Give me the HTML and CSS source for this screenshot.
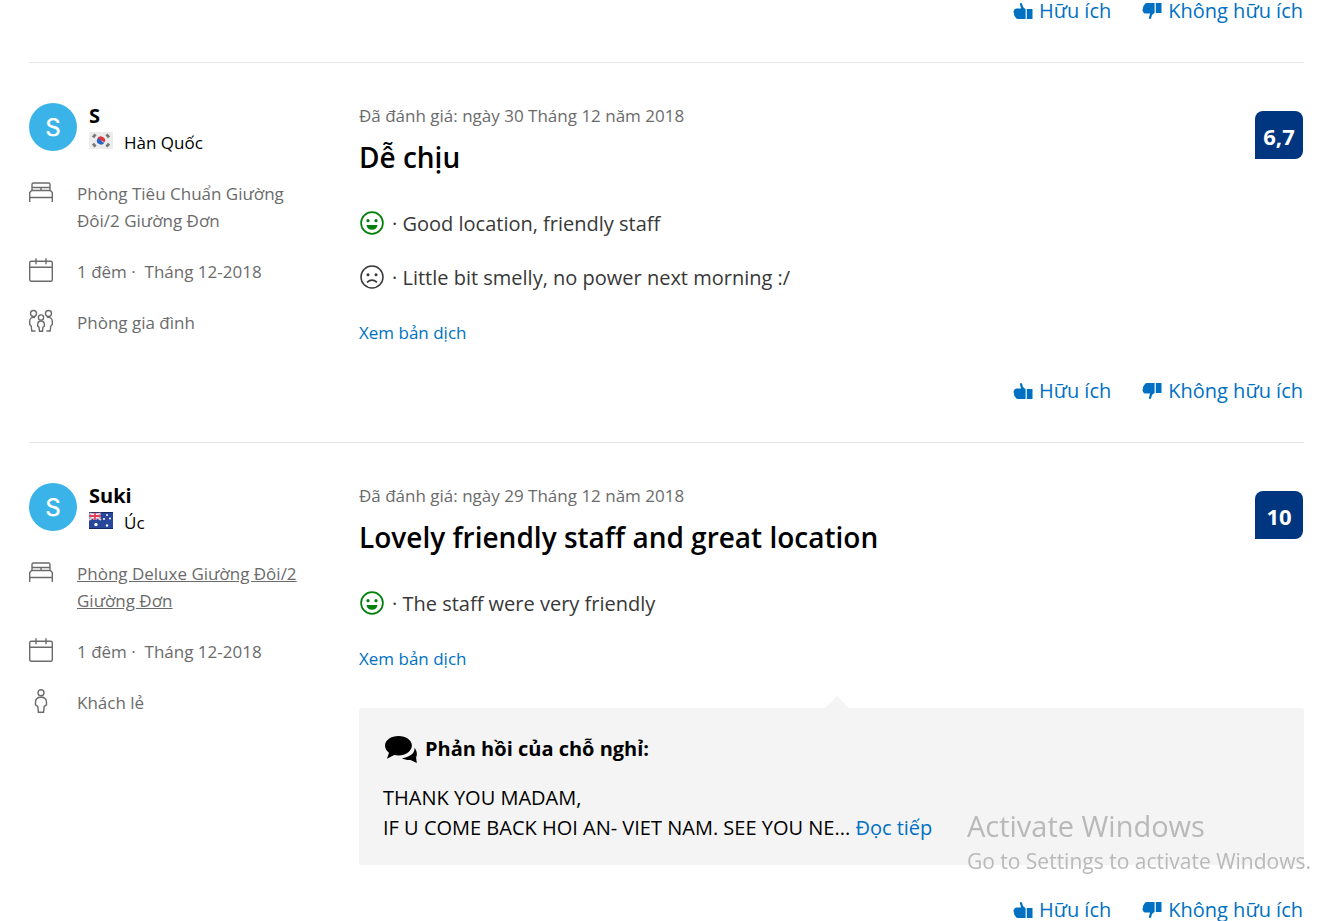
FILE: index.html
```
<!DOCTYPE html>
<html lang="vi">
<head>
<meta charset="utf-8">
<meta name="viewport" content="width=device-width, initial-scale=1">
<title>Đánh giá của khách</title>
<link rel="stylesheet" href="styles.css">
</head>
<body>
<svg class="sprite" aria-hidden="true">
  <symbol id="bed" viewBox="0 0 24 24"><path d="M3 10.500V4.500Q3 3 4.500 3h15Q21 3 21 4.500v6M3.500 7.500h17M12 7.500v3M.7 22v-9.500l2-2h18.600l2 2V22M.7 17.500h22.600"/></symbol>
  <symbol id="calendar" viewBox="0 0 24 24"><rect x=".7" y="3.200" width="22.600" height="20" rx="1.500"/><path d="M.7 9.200h22.600M7 .3v6M17 .3v6"/></symbol>
  <symbol id="family" viewBox="0 0 24 24"><circle cx="4.500" cy="4.500" r="3"/><circle cx="19.500" cy="4.500" r="3"/><circle cx="12" cy="8.500" r="2.600"/><path d="M6 8.500Q1 7.800.7 12v3.500l1.500 1.500.6 5H6.500M18 8.500q5-.7 5.300 3.500v3.500l-1.500 1.500-.6 5h-3.700M12 12q-3.300 0-3.300 3.200v2l1.300 1 .5 4h3l.5-4 1.300-1v-2Q15.300 12 12 12z"/></symbol>
  <symbol id="person" viewBox="0 0 24 24"><circle cx="12" cy="3.700" r="3"/><path d="M12 8.300q-5.500 0-5.500 5v2.500l2.300 1.700.6 5.800h5.200l.6-5.800 2.300-1.700v-2.500q0-5-5.500-5z"/></symbol>
  <symbol id="smile" viewBox="0 0 24 24"><circle cx="12" cy="12" r="10.900" fill="none" stroke="currentColor" stroke-width="1.700"/><circle cx="8" cy="9.700" r="1.600"/><circle cx="16" cy="9.700" r="1.600"/><path d="M6.500 14h11q-.6 4.700-5.500 4.700T6.500 14z"/></symbol>
  <symbol id="frown" viewBox="0 0 24 24"><circle cx="12" cy="12" r="11" fill="none" stroke="currentColor" stroke-width="1.500"/><circle cx="8" cy="9.700" r="1.500"/><circle cx="16" cy="9.700" r="1.500"/><path d="M7 17.300q5-4.500 10 0" fill="none" stroke="currentColor" stroke-width="1.600"/></symbol>
  <symbol id="thumb" viewBox="0 0 20 20"><path d="M6.800 2.800Q7.800 1.500 9 2.600L10 6l2.600 2.300V18H5q-2.200 0-2.700-2l-1.100-1.500-.2-1.800-.6-2 .8-1.800Q1.600 7.400 3.500 7.400h4.600zM13.800 8H19.500v10h-5.700z"/></symbol>
  <symbol id="chat" viewBox="0 0 34 30"><path d="M15.500 2C8 2 2 6.200 2 11.600c0 2.900 1.500 5.300 4 7.200L4 24.700l7.200-3.600q2 .4 4.300.4c7.500 0 13.400-4.400 13.400-9.900S23 2 15.500 2z"/><path d="M31.500 13.500c.8 6-5 9.800-12.500 10.700 2.500 1.500 6 2 8.500 1.700l6.300 3-.7-5.500c1.500-3 .7-6.500-1.600-9.900z"/></symbol>
</svg>

<main class="reviews">
  <article class="review review--partial">
    <div class="actions">
      <button class="vote" type="button"><svg class="vote__icon"><use href="#thumb"/></svg>Hữu ích</button>
      <button class="vote" type="button"><svg class="vote__icon vote__icon--down"><use href="#thumb"/></svg>Không hữu ích</button>
    </div>
  </article>

  <article class="review">
    <div class="review__grid">
      <aside class="guest">
        <header class="guest__head">
          <span class="avatar">S</span>
          <div>
            <div class="guest__name">S</div>
            <div class="guest__country">
              <svg class="flag" viewBox="0 0 24 17"><rect width="24" height="17" fill="#ececec"/><path d="M8.400 6.700a4 4 0 0 1 7.200 3.600z" fill="#e0343f"/><path d="M8.400 6.700a4 4 0 0 0 7.200 3.600q-1.500.8-3.600-1.800T8.400 6.700z" fill="#2961c4"/><path d="M4 5.300l2.500-3M17.500 2.300l2.500 3M4 11.700l2.500 3M17.500 14.700l2.500-3" stroke="#777" stroke-width="2.800"/></svg>
              Hàn Quốc
            </div>
          </div>
        </header>
        <ul class="stay">
          <li class="stay__item"><svg class="stay__icon"><use href="#bed"/></svg><span>Phòng Tiêu Chuẩn Giường Đôi/2 Giường Đơn</span></li>
          <li class="stay__item"><svg class="stay__icon"><use href="#calendar"/></svg><span>1 đêm ·&nbsp; Tháng 12-2018</span></li>
          <li class="stay__item"><svg class="stay__icon"><use href="#family"/></svg><span>Phòng gia đình</span></li>
        </ul>
      </aside>
      <section class="content">
        <div class="content__head">
          <div>
            <p class="date">Đã đánh giá: ngày 30 Tháng 12 năm 2018</p>
            <h3 class="title">Dễ chịu</h3>
          </div>
          <div class="score">6,7</div>
        </div>
        <div class="comments">
          <p class="comment"><svg class="face face--good"><use href="#smile"/></svg>· Good location, friendly staff</p>
          <p class="comment"><svg class="face"><use href="#frown"/></svg>· Little bit smelly, no power next morning :/</p>
        </div>
        <a class="translate" href="#">Xem bản dịch</a>
      </section>
    </div>
    <div class="actions">
      <button class="vote" type="button"><svg class="vote__icon"><use href="#thumb"/></svg>Hữu ích</button>
      <button class="vote" type="button"><svg class="vote__icon vote__icon--down"><use href="#thumb"/></svg>Không hữu ích</button>
    </div>
  </article>

  <article class="review">
    <div class="review__grid">
      <aside class="guest">
        <header class="guest__head">
          <span class="avatar">S</span>
          <div>
            <div class="guest__name">Suki</div>
            <div class="guest__country">
              <svg class="flag" viewBox="0 0 24 17"><rect width="24" height="17" fill="#28469a"/><path d="M0 0l12 8M12 0L0 8" stroke="#f3c6cf" stroke-width="2"/><path d="M6 0v8M0 4h12" stroke="#fff" stroke-width="3"/><path d="M6 0v8M0 4h12" stroke="#e0405a" stroke-width="1.800"/><g fill="#fff"><circle cx="7" cy="12.500" r="1.700"/><circle cx="18" cy="3" r="1"/><circle cx="15" cy="7" r="1"/><circle cx="21" cy="6.500" r="1"/><circle cx="18" cy="13.500" r="1.200"/></g><path d="M0 .5h24M0 16.500h24" stroke="#101c50" opacity=".7"/></svg>
              Úc
            </div>
          </div>
        </header>
        <ul class="stay">
          <li class="stay__item"><svg class="stay__icon"><use href="#bed"/></svg><a class="stay__link" href="#">Phòng Deluxe Giường Đôi/2 Giường Đơn</a></li>
          <li class="stay__item"><svg class="stay__icon"><use href="#calendar"/></svg><span>1 đêm ·&nbsp; Tháng 12-2018</span></li>
          <li class="stay__item"><svg class="stay__icon"><use href="#person"/></svg><span>Khách lẻ</span></li>
        </ul>
      </aside>
      <section class="content">
        <div class="content__head">
          <div>
            <p class="date">Đã đánh giá: ngày 29 Tháng 12 năm 2018</p>
            <h3 class="title">Lovely friendly staff and great location</h3>
          </div>
          <div class="score">10</div>
        </div>
        <div class="comments">
          <p class="comment"><svg class="face face--good"><use href="#smile"/></svg>· The staff were very friendly</p>
        </div>
        <a class="translate" href="#">Xem bản dịch</a>
        <div class="reply">
          <h4 class="reply__title"><svg class="reply__icon"><use href="#chat"/></svg>Phản hồi của chỗ nghỉ:</h4>
          <p class="reply__text">THANK YOU MADAM,<br>IF U COME BACK HOI AN- VIET NAM. SEE YOU NE... <a class="reply__more" href="#">Đọc tiếp</a></p>
        </div>
      </section>
    </div>
    <div class="actions">
      <button class="vote" type="button"><svg class="vote__icon"><use href="#thumb"/></svg>Hữu ích</button>
      <button class="vote" type="button"><svg class="vote__icon vote__icon--down"><use href="#thumb"/></svg>Không hữu ích</button>
    </div>
  </article>
</main>

<div class="watermark">
  <div class="watermark__title">Activate Windows</div>
  <div class="watermark__text">Go to Settings to activate Windows.</div>
</div>
</body>
</html>
```
FILE: styles.css
```
* {
  box-sizing: border-box;
}

html {
  scrollbar-width: none;
}

body,
p,
h3,
h4,
ul {
  margin: 0;
  padding: 0;
}

body {
  background: #fff;
  color: #000;
  font-family: "Segoe UI", "Open Sans", "Noto Sans", sans-serif;
  font-size: 17px;
  line-height: 27px;
}

.sprite {
  position: absolute;
  width: 0;
  height: 0;
}

.reviews {
  padding: 0 35px 0 29px;
}

.review {
  padding: 39px 0 40px;
  border-top: 1px solid #e7e7e7;
}

.review--partial {
  padding-top: 0;
  border-top: 0;
}

.review:last-child {
  padding-bottom: 0;
}

.review__grid {
  display: grid;
  grid-template-columns: 282px minmax(0, 1fr);
  column-gap: 48px;
}

.guest__head {
  display: flex;
  gap: 12px;
}

.avatar {
  flex: none;
  width: 48px;
  height: 48px;
  margin-top: 1px;
  border-radius: 50%;
  background: #3ab4e8;
  color: #fff;
  font-family: Inter, "Liberation Sans", sans-serif;
  font-size: 24px;
  font-weight: 500;
  line-height: 50px;
  text-align: center;
}

.guest__name {
  font-size: 20px;
  font-weight: 700;
}

.guest__country {
  display: flex;
  gap: 11px;
}

.flag {
  width: 24px;
  height: 17px;
  margin-top: 3px;
}

.stay {
  display: grid;
  gap: 24px;
  margin-top: 24px;
  list-style: none;
  color: #6b6b6b;
}

.stay__item {
  display: flex;
  gap: 24px;
}

.stay__icon {
  flex: none;
  width: 24px;
  height: 24px;
  fill: none;
  stroke: #6b6b6b;
  stroke-width: 1.4;
}

.stay__link {
  color: inherit;
}

.content__head {
  display: flex;
  justify-content: space-between;
}

.date {
  color: #6b6b6b;
}

.title {
  margin-top: 10px;
  font-size: 28px;
  font-weight: 600;
  line-height: 36px;
}

.score {
  flex: none;
  width: 48px;
  height: 48px;
  margin: 9px 1px 0 0;
  border-radius: 8px 8px 8px 0;
  background: #003580;
  color: #fff;
  font-size: 22px;
  font-weight: 700;
  line-height: 50px;
  text-align: center;
}

.comments {
  display: grid;
  gap: 24px;
  margin: 34px 0 26px;
}

.comment {
  display: flex;
  gap: 8px;
  color: #383838;
  font-size: 20px;
  line-height: 30px;
}

.face {
  flex: none;
  width: 24px;
  height: 24px;
  margin: 2px 0 0 1px;
  fill: currentColor;
}

.face--good {
  color: #008009;
}

.translate {
  display: block;
  width: fit-content;
  color: #0071c2;
  text-decoration: none;
}

.reply {
  position: relative;
  margin-top: 36px;
  padding: 25px 24px 22px;
  border-radius: 3px;
  background: #f4f4f4;
}

.reply::before {
  content: "";
  position: absolute;
  top: -12px;
  left: 50%;
  border: 12px solid transparent;
  border-top-width: 0;
  border-bottom-color: #f4f4f4;
  translate: -7px 0;
}

.reply__title {
  display: flex;
  align-items: center;
  gap: 8px;
  font-size: 20px;
  font-weight: 700;
  line-height: 32px;
}

.reply__icon {
  width: 34px;
  height: 30px;
}

.reply__text {
  margin-top: 18px;
  font-size: 20px;
  line-height: 30px;
}

.reply__more {
  color: #0071c2;
  text-decoration: none;
}

.actions {
  display: flex;
  justify-content: flex-end;
  gap: 31px;
  margin-top: 34px;
  padding-right: 1px;
}

.review--partial .actions {
  margin-top: 0;
}

.vote {
  display: flex;
  align-items: center;
  gap: 6px;
  height: 22px;
  padding: 0;
  border: 0;
  background: none;
  color: #0071c2;
  font: inherit;
  font-size: 20px;
  line-height: 22px;
  cursor: pointer;
}

.vote__icon {
  width: 20px;
  height: 20px;
  fill: currentColor;
}

.vote__icon--down {
  transform: scaleY(-1);
}

.watermark {
  position: fixed;
  right: 28px;
  bottom: 45px;
  color: #b9b9b9;
  pointer-events: none;
}

.watermark__title {
  font-size: 29px;
  line-height: 40px;
}

.watermark__text {
  font-size: 21px;
  line-height: 30px;
}
```
